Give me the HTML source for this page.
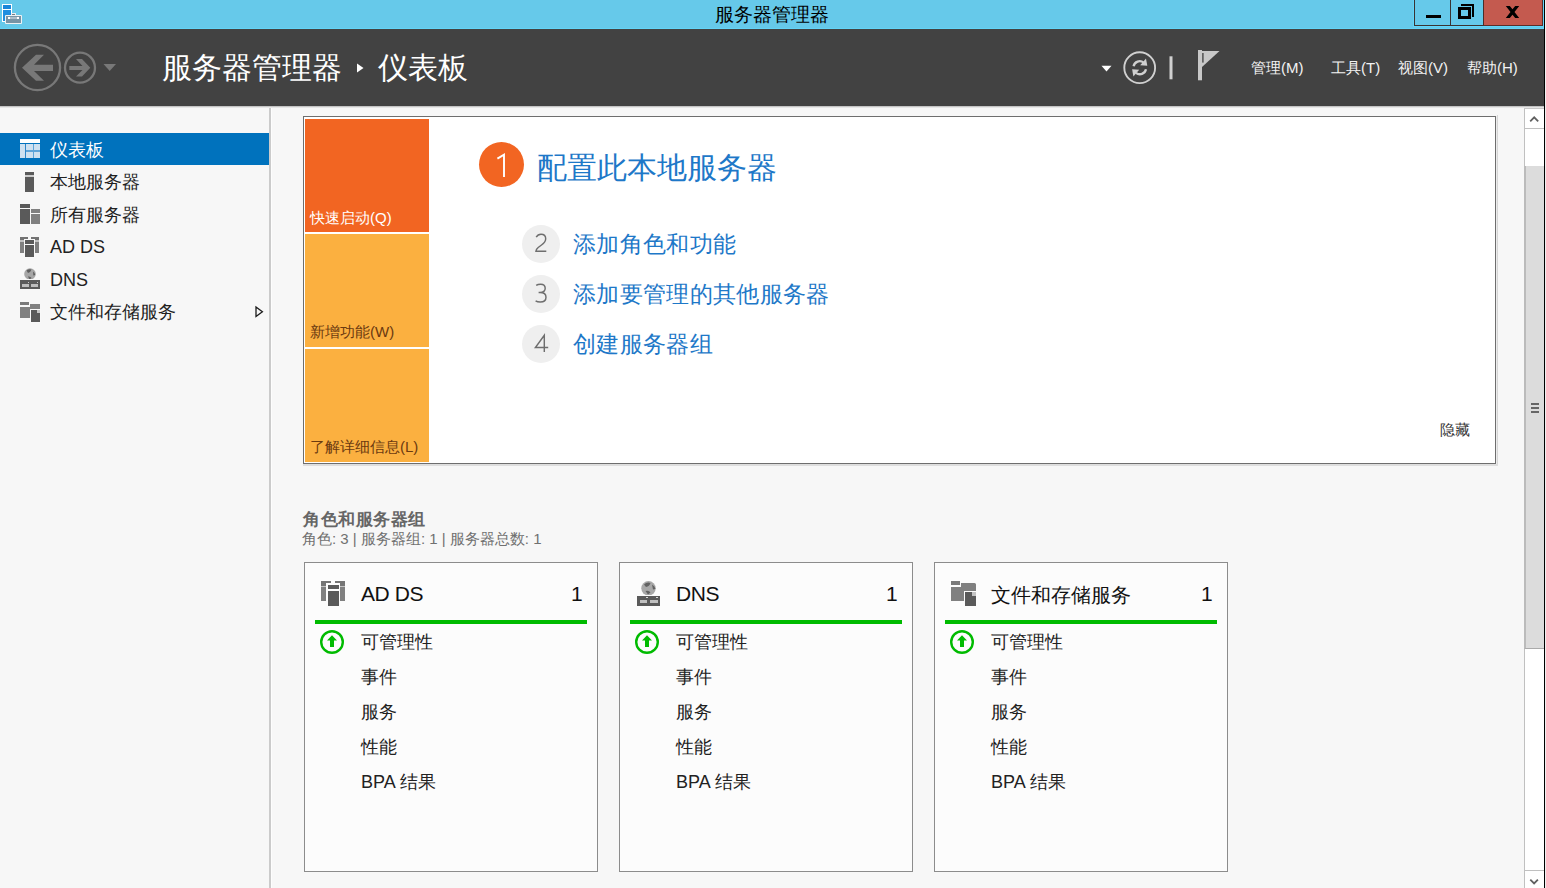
<!DOCTYPE html>
<html><head><meta charset="utf-8">
<style>
*{margin:0;padding:0;box-sizing:border-box}
html,body{width:1546px;height:888px;overflow:hidden;background:#f7f7f7;font-family:"Liberation Sans",sans-serif;color:#222}
.a{position:absolute;white-space:nowrap;line-height:1}
#tb{position:absolute;left:0;top:0;width:1546px;height:29px;background:#66c9ea}
#hd{position:absolute;left:0;top:29px;width:1546px;height:77px;background:#424242}
</style></head><body>
<div id="tb"></div>
<div id="hd"></div>
<div style="position:absolute;left:0;top:106px;width:1544px;height:1px;background:#c4c4c4"></div><div style="position:absolute;left:0;top:107px;width:1544px;height:1px;background:#e6e6e6"></div>

<!-- title -->
<div class="a" id="ttl" style="left:715px;top:5px;font-size:19.3px;color:#000">服务器管理器</div>
<!-- breadcrumb -->
<div class="a" id="bc1" style="left:162px;top:53px;font-size:30.3px;color:#fff">服务器管理器</div>
<div class="a" id="bc2" style="left:378px;top:53px;font-size:30.3px;color:#fff">仪表板</div>
<!-- menus -->
<div class="a" id="m1" style="left:1251px;top:60px;font-size:15px;color:#f2f2f2">管理(M)</div>
<div class="a" id="m2" style="left:1331px;top:60px;font-size:15px;color:#f2f2f2">工具(T)</div>
<div class="a" id="m3" style="left:1398px;top:60px;font-size:15px;color:#f2f2f2">视图(V)</div>
<div class="a" id="m4" style="left:1467px;top:60px;font-size:15px;color:#f2f2f2">帮助(H)</div>
<!-- nav -->
<div style="position:absolute;left:0;top:133px;width:269px;height:32px;background:#0072bd"></div>
<div style="position:absolute;left:269px;top:108px;width:2px;height:780px;background:#cbcbcb"></div><div style="position:absolute;left:271px;top:108px;width:1px;height:780px;background:#fdfdfd"></div>
<div class="a" id="n1" style="left:50px;top:141px;font-size:18px;color:#fff">仪表板</div>
<div class="a" id="n2" style="left:50px;top:173px;font-size:18px;color:#222">本地服务器</div>
<div class="a" id="n3" style="left:50px;top:206px;font-size:18px;color:#222">所有服务器</div>
<div class="a" id="n4" style="left:50px;top:238px;font-size:18px;color:#222">AD DS</div>
<div class="a" id="n5" style="left:50px;top:271px;font-size:18px;color:#222">DNS</div>
<div class="a" id="n6" style="left:50px;top:302.5px;font-size:18px;color:#222">文件和存储服务</div>
<!-- quick start box -->
<div style="position:absolute;left:303px;top:116px;width:1193px;height:348px;border:1px solid #6e6e6e;background:#fff"></div>
<div style="position:absolute;left:305px;top:119px;width:124px;height:113px;background:#f26522"></div>
<div style="position:absolute;left:305px;top:234px;width:124px;height:113px;background:#fbb040"></div>
<div style="position:absolute;left:305px;top:349px;width:124px;height:113px;background:#fbb040"></div>
<div class="a" id="q1" style="left:310px;top:210px;font-size:15px;color:#fff">快速启动(Q)</div>
<div class="a" id="q2" style="left:310px;top:324px;font-size:15px;color:#6b3a10">新增功能(W)</div>
<div class="a" id="q3" style="left:310px;top:439px;font-size:15px;color:#6b3a10">了解详细信息(L)</div>
<div style="position:absolute;left:479px;top:142px;width:45px;height:45px;border-radius:50%;background:#f26522"></div>
<div class="a" id="h1" style="left:537px;top:152.5px;font-size:30px;color:#1e78c8;font-weight:300">配置此本地服务器</div>
<div style="position:absolute;left:522px;top:225px;width:38px;height:38px;border-radius:50%;background:#efefef"></div>
<div style="position:absolute;left:522px;top:275px;width:38px;height:38px;border-radius:50%;background:#efefef"></div>
<div style="position:absolute;left:522px;top:325px;width:38px;height:38px;border-radius:50%;background:#efefef"></div>
<div class="a" id="l2" style="left:573px;top:233px;font-size:23px;color:#1e78c8;letter-spacing:0.35px">添加角色和功能</div>
<div class="a" id="l3" style="left:573px;top:283px;font-size:23px;color:#1e78c8;letter-spacing:0.35px">添加要管理的其他服务器</div>
<div class="a" id="l4" style="left:573px;top:333px;font-size:23px;color:#1e78c8;letter-spacing:0.35px">创建服务器组</div>
<svg style="position:absolute;left:470px;top:130px" width="90" height="240" viewBox="470 130 90 240">
<path d="M504 177V154.6L497.4 158.6" fill="none" stroke="#fff" stroke-width="1.9"/>
<g fill="none" stroke="#6e6e6e" stroke-width="1.45">
<path d="M536.2 237.2C537.4 235 539.1 234.2 541 234.2C544 234.2 545.7 236 545.7 238.7C545.7 241.3 544.2 243.1 541.5 245L538.2 247.5C536.6 248.8 535.9 250 535.9 251.3H546.3"/>
<path d="M536.2 285.4C537.4 284.5 538.9 284.2 540.7 284.2C543.6 284.2 545.2 285.9 545.2 288.3C545.2 290.9 543.3 292.5 540 292.5H538.6M540 292.5C543.7 292.5 546 294.4 546 297.2C546 300.3 543.6 302 540.2 302C538.4 302 536.8 301.6 535.6 300.8"/>
<path d="M544.3 352V335.2L535.4 347.5H548.2"/>
</g></svg>
<div class="a" id="hide" style="left:1440px;top:421.5px;font-size:15px;color:#333">隐藏</div>
<!-- roles -->
<div class="a" id="rt" style="left:303px;top:511px;font-size:17px;color:#666;font-weight:bold;letter-spacing:0.5px">角色和服务器组</div>
<div class="a" id="rs" style="left:302px;top:531px;font-size:15px;color:#707070">角色: 3 | 服务器组: 1 | 服务器总数: 1</div>
<div style="position:absolute;left:304px;top:562px;width:294px;height:310px;border:1px solid #8c8c8c;background:#fcfcfc"></div>
<div style="position:absolute;left:315px;top:620px;width:272px;height:4px;background:#00bb00"></div>
<svg style="position:absolute;left:0;top:0;pointer-events:none" width="1546" height="888"><g shape-rendering="crispEdges"><rect x="321" y="581" width="10" height="5" fill="#757575"/><rect x="321" y="586" width="5" height="1" fill="#c4c4c4"/><rect x="321" y="587" width="5" height="14" fill="#808080"/>
<rect x="335" y="581" width="10" height="5" fill="#757575"/><rect x="340" y="586" width="5" height="1" fill="#c4c4c4"/><rect x="340" y="587" width="5" height="14" fill="#808080"/>
<rect x="326" y="583" width="14" height="24" fill="#fcfcfc"/>
<rect x="328" y="585" width="11" height="4" fill="#5a5a5a"/><rect x="328" y="591" width="11" height="15" fill="#5a5a5a"/></g>
<circle cx="332" cy="642" r="10.8" fill="none" stroke="#00bb00" stroke-width="2.4"/>
<path d="M332 635.2L337 640.5H334V647H330V640.5H327Z" fill="#00bb00"/>
</svg>
<div class="a" id="ct0" style="left:361px;top:582.5px;font-size:21px;color:#111;letter-spacing:-0.4px">AD DS</div>
<div class="a" id="cn0" style="left:571px;top:582.5px;font-size:21px;color:#111">1</div>
<div class="a" id="ci0a" style="left:361px;top:633px;font-size:18px;color:#222">可管理性</div>
<div class="a" id="ci0b" style="left:361px;top:668px;font-size:18px;color:#222">事件</div>
<div class="a" id="ci0c" style="left:361px;top:703px;font-size:18px;color:#222">服务</div>
<div class="a" id="ci0d" style="left:361px;top:738px;font-size:18px;color:#222">性能</div>
<div class="a" id="ci0e" style="left:361px;top:773px;font-size:18px;color:#222">BPA 结果</div>

<div style="position:absolute;left:619px;top:562px;width:294px;height:310px;border:1px solid #8c8c8c;background:#fcfcfc"></div>
<div style="position:absolute;left:630px;top:620px;width:272px;height:4px;background:#00bb00"></div>
<svg style="position:absolute;left:0;top:0;pointer-events:none" width="1546" height="888"><circle cx="648.5" cy="588.3" r="7.2" fill="#a8a8a8"/>
<path d="M644 584.5q3-3 6.5-1.5q-1 3.5-4.5 4zM652 584.5q3 1.5 3.5 4.5l-2.5 0.5zM645.5 591q3.5-1 5 1.5l-2.5 2z" fill="#626262"/>
<g shape-rendering="crispEdges"><rect x="636" y="595" width="25" height="1" fill="#fcfcfc"/>
<rect x="637" y="596" width="23" height="10" fill="#5a5a5a"/>
<rect x="640" y="600" width="7" height="3" fill="#c0c0c0"/><rect x="650" y="600" width="8" height="3" fill="#c0c0c0"/>
<rect x="646" y="597" width="2" height="1" fill="#d8d8d8"/><rect x="656" y="597" width="2" height="1" fill="#d8d8d8"/></g>
<circle cx="647" cy="642" r="10.8" fill="none" stroke="#00bb00" stroke-width="2.4"/>
<path d="M647 635.2L652 640.5H649V647H645V640.5H642Z" fill="#00bb00"/>
</svg>
<div class="a" id="ct1" style="left:676px;top:582.5px;font-size:21px;color:#111;letter-spacing:-0.4px">DNS</div>
<div class="a" id="cn1" style="left:886px;top:582.5px;font-size:21px;color:#111">1</div>
<div class="a" id="ci1a" style="left:676px;top:633px;font-size:18px;color:#222">可管理性</div>
<div class="a" id="ci1b" style="left:676px;top:668px;font-size:18px;color:#222">事件</div>
<div class="a" id="ci1c" style="left:676px;top:703px;font-size:18px;color:#222">服务</div>
<div class="a" id="ci1d" style="left:676px;top:738px;font-size:18px;color:#222">性能</div>
<div class="a" id="ci1e" style="left:676px;top:773px;font-size:18px;color:#222">BPA 结果</div>

<div style="position:absolute;left:934px;top:562px;width:294px;height:310px;border:1px solid #8c8c8c;background:#fcfcfc"></div>
<div style="position:absolute;left:945px;top:620px;width:272px;height:4px;background:#00bb00"></div>
<svg style="position:absolute;left:0;top:0;pointer-events:none" width="1546" height="888"><g shape-rendering="crispEdges"><rect x="951" y="581" width="9" height="4" fill="#7a7a7a"/></g>
<path d="M951 587H961V583H974.5Q976 583 976 584.5V601H951Z" fill="#808080"/>
<g shape-rendering="crispEdges"><rect x="964" y="591" width="13" height="16" fill="#fcfcfc"/>
<path d="M965 592H972V596H976V606H965Z" fill="#5a5a5a"/>
<rect x="972" y="592" width="4" height="4" fill="#c4c4c4"/></g>
<circle cx="962" cy="642" r="10.8" fill="none" stroke="#00bb00" stroke-width="2.4"/>
<path d="M962 635.2L967 640.5H964V647H960V640.5H957Z" fill="#00bb00"/>
</svg>
<div class="a" id="ct2" style="left:991px;top:585px;font-size:20px;color:#111">文件和存储服务</div>
<div class="a" id="cn2" style="left:1201px;top:582.5px;font-size:21px;color:#111">1</div>
<div class="a" id="ci2a" style="left:991px;top:633px;font-size:18px;color:#222">可管理性</div>
<div class="a" id="ci2b" style="left:991px;top:668px;font-size:18px;color:#222">事件</div>
<div class="a" id="ci2c" style="left:991px;top:703px;font-size:18px;color:#222">服务</div>
<div class="a" id="ci2d" style="left:991px;top:738px;font-size:18px;color:#222">性能</div>
<div class="a" id="ci2e" style="left:991px;top:773px;font-size:18px;color:#222">BPA 结果</div>

<!-- window right edge -->
<div style="position:absolute;left:1544px;top:0;width:1px;height:888px;background:#000"></div>
<div style="position:absolute;left:1545px;top:0;width:1px;height:888px;background:#f0f0f0"></div>
<!-- title icon -->
<svg style="position:absolute;left:0;top:0" width="24" height="26" viewBox="0 0 24 26">
<rect x="2" y="4" width="10" height="18" fill="#fff"/>
<rect x="3" y="5" width="8" height="4" fill="#1a86d9"/>
<rect x="3" y="10" width="8" height="11" fill="#1e8ee0"/>
<rect x="11" y="13" width="5" height="3" fill="#e8eef2"/>
<rect x="12" y="14" width="3" height="1" fill="#6f7f89"/>
<rect x="5" y="15" width="17" height="9" rx="1" fill="#eef2f4"/>
<rect x="6" y="16" width="15" height="7" fill="#7794a6"/>
<rect x="8" y="17" width="11" height="2" fill="#aebfca"/>
<rect x="8" y="17" width="2" height="2" fill="#fff"/>
<rect x="17" y="17" width="2" height="2" fill="#fff"/>
</svg>
<!-- caption buttons -->
<div style="position:absolute;left:0;top:28px;width:1544px;height:1px;background:#62d4f8"></div>
<svg style="position:absolute;left:1400px;top:0" width="146" height="29" viewBox="1400 0 146 29" shape-rendering="crispEdges">
<rect x="1413" y="0" width="1" height="27" fill="#62d6fa"/>
<rect x="1413" y="26" width="131" height="1" fill="#62d6fa"/>
<rect x="1484" y="0" width="58" height="25" fill="#c45a4f"/>
<rect x="1414" y="0" width="1" height="26" fill="#3a3332"/>
<rect x="1414" y="25" width="129" height="1" fill="#3a3332"/>
<rect x="1450" y="0" width="1" height="25" fill="#3a3332"/>
<rect x="1483" y="0" width="1" height="25" fill="#4a2e2a"/>
<rect x="1542" y="0" width="1" height="26" fill="#5a2e2a"/>
<rect x="1484" y="25" width="59" height="1" fill="#5a2e2a"/>
<rect x="1543" y="0" width="1" height="29" fill="#62d6fa"/>
<rect x="1426" y="15" width="15" height="3" fill="#000"/>
<rect x="1461" y="4" width="13" height="2" fill="#000"/>
<rect x="1472" y="4" width="2" height="13" fill="#000"/>
<path d="M1458 7H1471V19H1458ZM1461 10V16H1468V10Z" fill="#000" fill-rule="evenodd"/>
</svg>
<svg style="position:absolute;left:1500px;top:0" width="24" height="24" viewBox="1500 0 24 24">
<path d="M1505.8 6H1509.8L1512.5 9.3L1515.2 6H1519.2L1514.5 12L1519.2 18H1515.2L1512.5 14.7L1509.8 18H1505.8L1510.5 12Z" fill="#000"/>
</svg>
<!-- header nav -->
<svg style="position:absolute;left:0;top:29px" width="130" height="77" viewBox="0 29 130 77">
<circle cx="37.5" cy="67.5" r="22.6" fill="none" stroke="#787878" stroke-width="2.3"/>
<path d="M22 67.8L36 54.8H44L34 64.8H53V71H34L44 80.8H36Z" fill="#787878"/>
<circle cx="80" cy="67.7" r="15" fill="none" stroke="#787878" stroke-width="2.3"/>
<path d="M90.3 67.8L82 59H76L82.5 66H69.3V70H82.5L76 76.5H82Z" fill="#787878"/>
<path d="M103.5 64H116L109.7 71Z" fill="#787878"/>
</svg>
<svg style="position:absolute;left:355px;top:62px" width="10" height="12" viewBox="0 0 10 12">
<path d="M2 1.5L8.5 6L2 10.5Z" fill="#fff"/>
</svg>
<svg style="position:absolute;left:1095px;top:45px" width="130" height="40" viewBox="1095 45 130 40">
<path d="M1101.5 65.8H1111.5L1106.5 71.5Z" fill="#fff"/>
<circle cx="1139.7" cy="67.7" r="15.4" fill="none" stroke="#d0d0d0" stroke-width="1.9"/>
<path d="M1133.6 66.2A6.2 6.2 0 0 1 1143.6 62.6" fill="none" stroke="#d0d0d0" stroke-width="2.3"/>
<path d="M1146 58.6L1147.3 65.7L1140.2 65.3Z" fill="#d0d0d0"/>
<path d="M1146 69.2A6.2 6.2 0 0 1 1136 72.8" fill="none" stroke="#d0d0d0" stroke-width="2.3"/>
<path d="M1133.4 76.4L1132.1 69.3L1139.2 69.8Z" fill="#d0d0d0"/>
<rect x="1169.5" y="56.3" width="3" height="23" fill="#d0d0d0"/>
<rect x="1198" y="50" width="4" height="30.3" fill="#c8c8c8"/>
<path d="M1202 51H1219.5L1202 66.9Z" fill="#c8c8c8"/>
<rect x="1202.2" y="53" width="1.4" height="9.6" fill="#4a4a4a"/>
</svg>
<!-- nav icons -->
<svg style="position:absolute;left:0;top:130px" width="44" height="200" viewBox="0 130 44 200" shape-rendering="crispEdges">
<rect x="20" y="139" width="20" height="4" fill="#fff"/>
<rect x="20" y="144" width="20" height="14" fill="#cfe1f0"/>
<rect x="25" y="144" width="1" height="14" fill="#2f86c8"/>
<rect x="33" y="144" width="1" height="14" fill="#5ea4d8"/>
<rect x="26" y="150" width="14" height="2" fill="#5ea4d8"/>
<!-- local server -->
<rect x="25" y="172" width="9" height="3" fill="#5a5a5a"/>
<rect x="25" y="175" width="9" height="2" fill="#cdcdcd"/>
<rect x="25" y="177" width="9" height="15" fill="#5a5a5a"/>
<!-- all servers -->
<rect x="20" y="204" width="10" height="4" fill="#5a5a5a"/>
<rect x="20" y="209" width="10" height="15" fill="#5a5a5a"/>
<rect x="31" y="209" width="9" height="4" fill="#808080"/>
<rect x="31" y="214" width="9" height="10" fill="#808080"/>
<!-- AD DS -->
<rect x="20" y="237" width="8" height="3" fill="#737373"/>
<rect x="20" y="240" width="4" height="2" fill="#c2c2c2"/>
<rect x="20" y="242" width="4" height="11" fill="#808080"/>
<rect x="31" y="237" width="8" height="3" fill="#737373"/>
<rect x="35" y="240" width="4" height="2" fill="#c2c2c2"/>
<rect x="35" y="242" width="4" height="11" fill="#808080"/>
<rect x="24" y="239" width="11" height="19" fill="#f9f9f9"/>
<rect x="25" y="240" width="9" height="4" fill="#5a5a5a"/>
<rect x="25" y="245" width="9" height="12" fill="#5a5a5a"/>
<!-- DNS -->
<rect x="20" y="280" width="20" height="9" fill="#5a5a5a"/>
<rect x="22" y="284" width="7" height="3" fill="#bdbdbd"/>
<rect x="31" y="284" width="7" height="3" fill="#bdbdbd"/>
<rect x="28" y="282" width="1" height="1" fill="#c8c8c8"/>
<rect x="37" y="282" width="1" height="1" fill="#c8c8c8"/>
<!-- files -->
<rect x="20" y="302" width="9" height="3" fill="#7a7a7a"/>
<path d="M20 307H30V304H40V318H20Z" fill="#808080"/>
<rect x="30" y="309" width="11" height="14" fill="#f9f9f9"/>
<path d="M31 310H37V313H40V322H31Z" fill="#5a5a5a"/>
<rect x="37" y="310" width="3" height="3" fill="#c4c4c4"/>
</svg>
<svg style="position:absolute;left:20px;top:266px" width="20" height="16" viewBox="20 266 20 16">
<circle cx="30" cy="274" r="5.8" fill="#a6a6a6"/>
<path d="M26.5 270.5q2.5-2 5 -1q-1 3-3.5 3.5zM33 271.5q2 1 2.2 3.5l-1.8 0.5zM28 276.5q2.5-0.5 3.5 1.5l-2 1.5z" fill="#5e5e5e"/>
<rect x="20" y="279" width="20" height="1" fill="#f7f7f7"/>
</svg>
<svg style="position:absolute;left:252px;top:302px" width="16" height="20" viewBox="252 302 16 20">
<path d="M256 307L262.4 311.7L256 316.4Z" fill="none" stroke="#1b1b1b" stroke-width="1.3"/>
</svg>
<!-- quick start extra -->
<div style="position:absolute;left:1496px;top:116px;width:1px;height:349px;background:#ececec"></div>
<div style="position:absolute;left:1497px;top:115px;width:1px;height:351px;background:#d6d6d6"></div>
<div style="position:absolute;left:303px;top:464px;width:1195px;height:2px;background:#dedede"></div>
<!-- scrollbar -->
<div style="position:absolute;left:1524px;top:108px;width:20px;height:780px;background:#fff;border-left:1px solid #c0c0c0"></div>
<div style="position:absolute;left:1524px;top:108px;width:20px;height:1px;background:#c8c8c8"></div>
<div style="position:absolute;left:1525px;top:128px;width:19px;height:1px;background:#c0c0c0"></div>
<div style="position:absolute;left:1524px;top:166px;width:20px;height:483px;background:#dcdcdc;border-left:2px solid #bbb;border-bottom:1px solid #aaa"></div>
<div style="position:absolute;left:1531px;top:403px;width:8px;height:2px;background:#666"></div>
<div style="position:absolute;left:1531px;top:407px;width:8px;height:2px;background:#666"></div>
<div style="position:absolute;left:1531px;top:411px;width:8px;height:2px;background:#666"></div>
<div style="position:absolute;left:1525px;top:870px;width:19px;height:1px;background:#c0c0c0"></div>
<svg style="position:absolute;left:1524px;top:108px" width="20" height="20"><path d="M6.2 13.3L10.2 9.3L14.2 13.3" fill="none" stroke="#606060" stroke-width="1.8"/></svg>
<svg style="position:absolute;left:1524px;top:870px" width="20" height="18"><path d="M6.3 9.6L10.1 13.4L13.9 9.6" fill="none" stroke="#606060" stroke-width="1.8"/></svg>

</body></html>
